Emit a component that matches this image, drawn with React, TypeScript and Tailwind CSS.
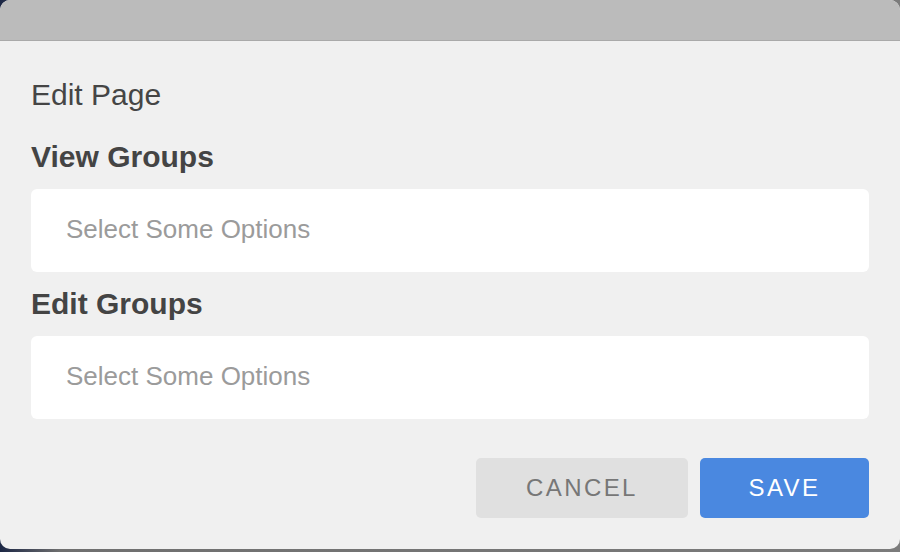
export default function App() {
  return (
    <div className="h-[552px] w-[900px] overflow-hidden bg-[linear-gradient(to_right,#1c2745_0px,#6f6f6f_60px,#7b7b7b_100%)] font-['Liberation_Sans',Arial,sans-serif]">
      <div className="flex h-[549px] flex-col overflow-hidden rounded-[10px] bg-[#f0f0f0]">
        <div className="h-[41px] shrink-0 border-b border-[#a9a9a9] bg-[#bbbbbb]" />

        <div className="flex flex-1 flex-col px-[31px] pt-[36px]">
          <h2 className="text-[30px] leading-[36px] text-[#454545]">Edit Page</h2>

          <label className="mt-[26px] text-[30px] font-bold leading-[36px] text-[#444444]">
            View Groups
          </label>
          <div className="mt-[14px] flex h-[83px] items-center rounded-[6px] bg-white px-[35px] pb-[3px]">
            <span className="text-[26px] text-[#9b9b9b]">Select Some Options</span>
          </div>

          <label className="mt-[14px] text-[30px] font-bold leading-[36px] text-[#444444]">
            Edit Groups
          </label>
          <div className="mt-[14px] flex h-[83px] items-center rounded-[6px] bg-white px-[35px] pb-[3px]">
            <span className="text-[26px] text-[#9b9b9b]">Select Some Options</span>
          </div>

          <div className="mt-[39px] flex justify-end gap-[12px]">
            <button
              type="button"
              className="flex h-[60px] w-[212px] items-center justify-center rounded-[5px] bg-[#e0e0e0] text-[24px] tracking-[0.1em] text-[#777777]"
            >
              CANCEL
            </button>
            <button
              type="button"
              className="flex h-[60px] w-[169px] items-center justify-center rounded-[5px] bg-[#4a88e0] text-[24px] tracking-[0.1em] text-white"
            >
              SAVE
            </button>
          </div>
        </div>
      </div>
    </div>
  );
}
